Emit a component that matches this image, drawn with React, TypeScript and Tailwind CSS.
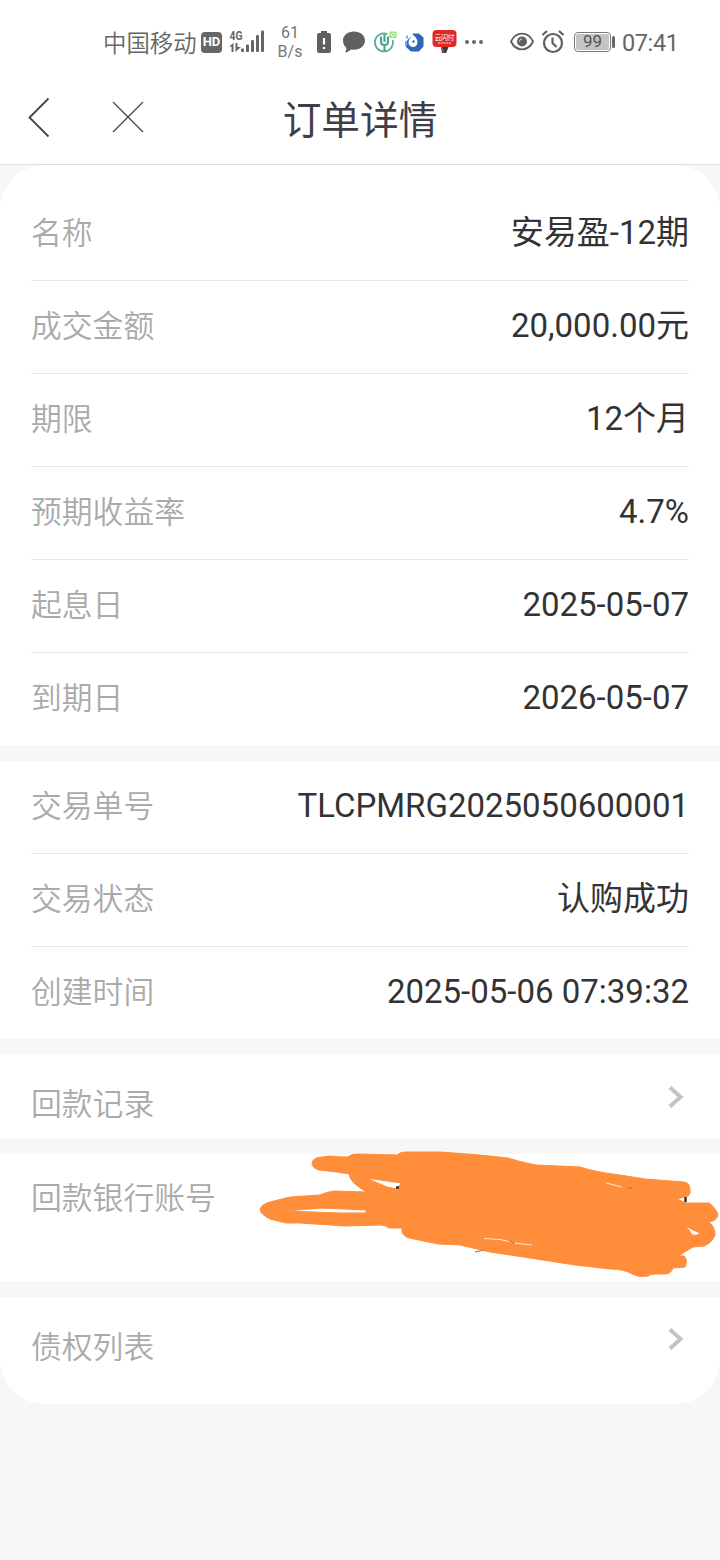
import { clsx } from "clsx";

type Field = { label: string; value: string };

const orderFields: Field[] = [
  { label: "名称", value: "安易盈-12期" },
  { label: "成交金额", value: "20,000.00元" },
  { label: "期限", value: "12个月" },
  { label: "预期收益率", value: "4.7%" },
  { label: "起息日", value: "2025-05-07" },
  { label: "到期日", value: "2026-05-07" },
];

const tradeFields: Field[] = [
  { label: "交易单号", value: "TLCPMRG2025050600001" },
  { label: "交易状态", value: "认购成功" },
  { label: "创建时间", value: "2025-05-06 07:39:32" },
];

function StatusBar() {
  return (
    <div className="flex h-[84px] items-center pl-[103px] text-[#666]">
      <span className="w-[98px] pt-[5px] text-[23.4px] font-[350] whitespace-nowrap">中国移动</span>
      <span className="flex h-[21px] w-[21px] items-center justify-center rounded-[4px] bg-[#666] text-[13px] font-bold text-white">
        HD
      </span>
      <svg className="ml-[7px]" width="38" height="26" viewBox="0 0 38 26" fill="currentColor">
        <text x="0.5" y="11" fontSize="13" fontWeight="700" textLength="13" lengthAdjust="spacingAndGlyphs">
          4G
        </text>
        <path d="M4.500 14v9H2.500v-5.500H0zM6.500 14h2v4H12l-5.500 5z" />
        <rect x="12" y="19.500" width="3" height="3.500" rx="1" />
        <rect x="17" y="15.500" width="3" height="7.500" rx="1" />
        <rect x="22" y="11" width="3" height="12" rx="1" />
        <rect x="27" y="6" width="3" height="17" rx="1" />
        <rect x="32" y="1.500" width="3" height="21.500" rx="1" />
      </svg>
      <span className="ml-[8px] w-[30px] text-center text-[16px] leading-[19px] text-[#777]">
        61
        <br />
        B/s
      </span>
      <svg className="ml-[12px]" width="14" height="24" viewBox="0 0 14 24">
        <path d="M4 1h6v2h2a2 2 0 0 1 2 2v16a2 2 0 0 1-2 2H2a2 2 0 0 1-2-2V5a2 2 0 0 1 2-2h2z" fill="#606060" />
        <path d="M7 8v6.500M7 17v2" stroke="#fff" strokeWidth="2.200" />
      </svg>
      <svg className="ml-[11px]" width="24" height="24" viewBox="0 0 24 24">
        <path
          d="M12 1.500c6.300 0 11 3.900 11 9s-4.700 9.300-11 9.300c-1 0-2-.1-3-.3-1.600 1.600-3.600 2.700-6 3 1-1.500 1.500-3 1.300-4.700C2.200 16 1 13.500 1 10.500c0-5.100 4.700-9 11-9z"
          fill="#606060"
        />
      </svg>
      <svg className="ml-[8px]" width="23" height="24" viewBox="0 0 23 24" fill="none">
        <path d="M13.500 4.200A9 9 0 1 0 18.600 10" stroke="#57ab9b" strokeWidth="1.800" />
        <path d="M10.500 3v9M7 6.500V12q0 3 3.500 3t3.500-3V6.500M10.500 15v7" stroke="#4fa594" strokeWidth="2.200" />
        <rect x="15.500" y="1.500" width="7" height="6.500" fill="#9be27b" />
        <circle cx="19" cy="4.700" r="1.700" stroke="#e6ffe0" />
      </svg>
      <svg className="ml-[7px]" width="21" height="24" viewBox="0 0 21 24">
        <path d="M9 3.500h6l4.500 4v9L15 21.500H7L2 17v-5z" fill="#2d67bd" />
        <path d="M3 5.500v3M2 11v5" stroke="#78afe4" strokeWidth="2" fill="none" />
        <path d="M7 3c4 3.500 6.500 5.500 6.500 9.500a4.500 4.500 0 0 1-9 0c0-3.500 3-5 2.500-9.500z" fill="#fff" />
        <circle cx="9.500" cy="11.500" r="1.200" fill="#2d67bd" />
      </svg>
      <svg className="ml-[7px]" width="25" height="26" viewBox="0 0 25 26">
        <path d="M9 17h8l-3 7h-4z" fill="#263f55" />
        <path d="m10 19 2 5" stroke="#d83340" strokeWidth="1.500" />
        <rect x="0.500" y="1" width="24" height="17" rx="4" fill="#df2926" />
        <text x="2.500" y="10.500" fontSize="7" fill="#fff" textLength="20">
          云闪付
        </text>
        <path d="M6 14h13" stroke="#f6a5a2" strokeWidth="1.500" strokeDasharray="2 .7" />
      </svg>
      <svg className="ml-[7px]" width="20" height="6" viewBox="0 0 20 6" fill="#666">
        <circle cx="3" cy="3" r="2" />
        <circle cx="10" cy="3" r="2" />
        <circle cx="17" cy="3" r="2" />
      </svg>
      <svg className="ml-[26px]" width="24" height="20" viewBox="0 0 24 20" fill="none">
        <path d="M1 9.500C6-1 18-1 23 9.500 18 20 6 20 1 9.500z" stroke="#606060" strokeWidth="1.900" />
        <circle cx="12" cy="9.500" r="5" fill="#606060" />
        <path d="M12 7a2.500 2.500 0 0 0-2.500 2.500" stroke="#ddd" />
      </svg>
      <svg className="ml-[7px]" width="24" height="26" viewBox="0 0 24 26" fill="none" stroke="#606060" strokeWidth="2.200">
        <circle cx="12" cy="14" r="9" />
        <path d="M11.500 8.500V14l4 4M1.500 6 6 2M22.500 6 18 2" />
      </svg>
      <div className="ml-[9px] flex h-5 w-[37px] items-center justify-center rounded-[4px] border border-[#777] p-px">
        <span className="flex h-full w-full items-center justify-center rounded-[2px] bg-[#c4c4c4] text-[17px] text-[#555]">
          99
        </span>
      </div>
      <span className="ml-px h-3 w-[3px] rounded-sm bg-[#666]" />
      <span className="ml-[7px] pt-[4px] text-[23.5px] tracking-[-0.4px]">07:41</span>
    </div>
  );
}

function NavBar() {
  return (
    <div className="grid h-[81px] grid-cols-[1fr_auto_1fr] items-center border-b border-[#dedede] pb-[12px]">
      <div className="flex items-center pl-[28px]">
        <svg width="22" height="42" viewBox="0 0 22 42" fill="none" stroke="#44434e" strokeWidth="1.800">
          <path d="M20.500 1.500 1.500 20.500l19 19" />
        </svg>
        <svg className="ml-[62px]" width="32" height="32" viewBox="0 0 32 32" fill="none" stroke="#44434e" strokeWidth="1.300">
          <path d="m1 0 30 30M31 0 1 30" />
        </svg>
      </div>
      <h1 className="pt-[7px] text-[38.7px] leading-none text-[#3f3e49]">订单详情</h1>
    </div>
  );
}

function FieldRow({ label, value, last }: Field & { last: boolean }) {
  return (
    <div className={clsx("flex items-center justify-between", last ? "h-[92px]" : "h-[93px] border-b border-[#e8e8e8]")}>
      <span className="text-[30.8px] font-[350] text-[#aaa]">{label}</span>
      <span className="pb-[2px] text-[33px] text-[#333]">{value}</span>
    </div>
  );
}

function FieldList({ fields }: { fields: Field[] }) {
  return (
    <div className="px-[31px]">
      {fields.map((field, i) => (
        <FieldRow key={field.label} {...field} last={i === fields.length - 1} />
      ))}
    </div>
  );
}

function Chevron() {
  return (
    <svg className="mr-[5px]" width="16" height="24" viewBox="0 0 16 24" fill="none" stroke="#c4c4c4" strokeWidth="4">
      <path d="m2 2.500 10.500 9.500L2 21.500" />
    </svg>
  );
}

function Scribble() {
  return (
    <svg className="absolute top-[-6px] left-[256px]" width="464" height="132" viewBox="256 1148 464 132">
      <path
        fill="#ff8d3a"
        fillRule="evenodd"
        stroke="#ff8d3a"
        strokeWidth="1"
        strokeLinejoin="round"
        d="M312 1163Q313 1157 323 1157L330 1156Q336 1157 348 1157Q351 1154 357 1154L397 1155Q400 1152 406 1152L440 1152Q475 1154 508 1158Q520 1162 536 1165L580 1167Q595 1172 620 1175L645 1179L684 1182Q691 1183 690 1193Q689 1197 684 1197L677 1199L686 1203H709Q713 1205 718 1214Q717 1221 709 1222Q715 1227 715 1235Q712 1243 704 1246L693 1247L678 1256L684 1256Q688 1260 685 1267L673 1268Q671 1274 665 1274L655 1274Q650 1274 648 1276Q639 1278 632 1274Q624 1269 610 1269L575 1265L530 1258L490 1252L460 1245L438 1244L409 1238Q401 1236 402 1228L389 1228Q386 1225 380 1225L345 1226L300 1223H286L270 1219Q260 1214 260 1209Q262 1204 270 1202L290 1197L320 1195Q326 1192 334 1191L367 1192Q350 1183 349 1174L337 1172L319 1170Q312 1168 312 1163ZM366 1178L380 1180L401 1183L397 1189L387 1187ZM286 1211L320 1208L366 1210L366 1213L340 1213ZM684 1225L691 1229L700 1233Q698 1236 692 1235Q690 1230 684 1225Z"
      />
      <path d="M606 1183l16 4M484 1238.500l16 1 18 4 14 1.500" stroke="#ffe6d3" strokeWidth="1.200" fill="none" />
      <path d="M396 1187.500h3M685.500 1197v5" stroke="#333" strokeWidth="2.500" />
      <path d="m475 1252 9-2M628 1188l4 0M509 1241l6 2" stroke="#a47748" strokeWidth="1.200" />
    </svg>
  );
}

export default function App() {
  return (
    <div className="h-[1560px] w-[720px] overflow-hidden bg-[#f7f7f7] font-[Roboto,'Noto_Sans_CJK_SC',sans-serif]">
      <header className="bg-white">
        <StatusBar />
        <NavBar />
      </header>
      <main className="flex flex-col">
        <section className="rounded-t-[45px] bg-white pt-[23px]">
          <FieldList fields={orderFields} />
        </section>
        <section className="mt-4 bg-white">
          <FieldList fields={tradeFields} />
        </section>
        <section className="mt-[15px] flex h-[85px] items-center justify-between bg-white px-[31px]">
          <span className="pt-[17px] text-[30.8px] font-[350] text-[#aaa]">回款记录</span>
          <Chevron />
        </section>
        <section className="relative mt-[15px] h-[127px] bg-white px-[31px] pt-[22px]">
          <span className="text-[30.8px] font-[350] text-[#aaa]">回款银行账号</span>
          <Scribble />
        </section>
        <section className="mt-4 flex h-[107px] justify-between rounded-b-[45px] bg-white px-[31px] pt-[28px]">
          <span className="text-[30.8px] font-[350] text-[#aaa]">债权列表</span>
          <div className="pt-[2px]">
            <Chevron />
          </div>
        </section>
      </main>
    </div>
  );
}
